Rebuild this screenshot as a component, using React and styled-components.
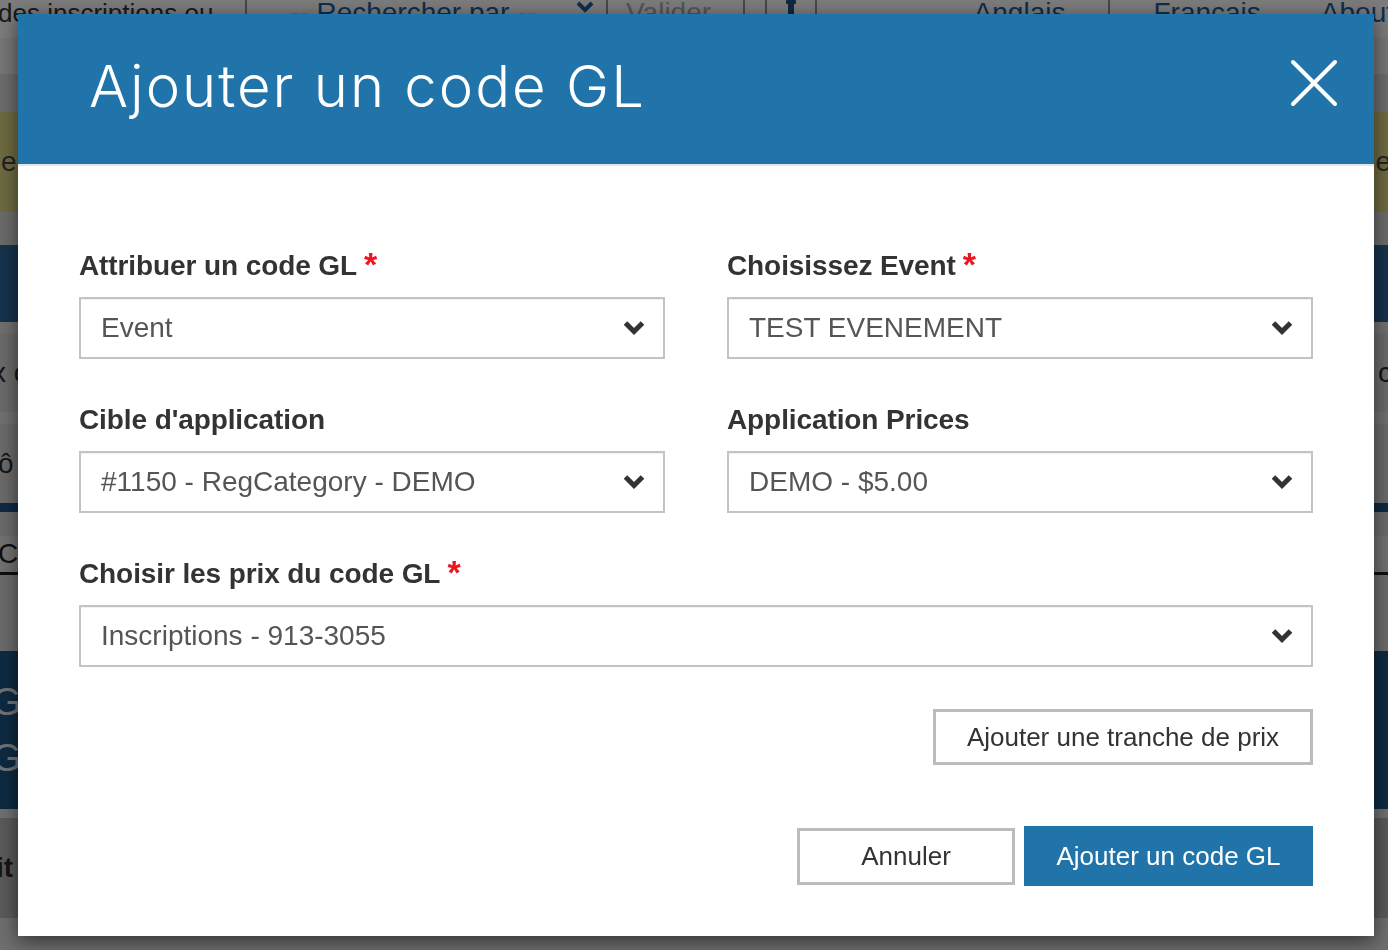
import React from 'react';
import styled, { createGlobalStyle } from 'styled-components';

const GlobalStyle = createGlobalStyle`
  html, body {
    margin: 0;
    padding: 0;
  }
  body {
    font-family: "Liberation Sans", Arial, Helvetica, sans-serif;
    color: #333;
    background: #fff;
    overflow: hidden;
  }
`;

/* ---------- page under the dialog ---------- */

const Page = styled.div`
  height: 950px;
  display: flex;
  flex-direction: column;
  background: #dadada;
  font-size: 28px;
  overflow: hidden;
`;

const TopBar = styled.nav`
  height: 38px;
  flex-shrink: 0;
  display: flex;
  background: #f6f6f6;
  line-height: 26px;
`;

const TopItem = styled.div`
  display: flex;
  align-items: flex-start;
  gap: 40px;
  padding: 0 ${(p) => p.$padRight || 0}px 0 ${(p) => p.$padLeft || 0}px;
  width: ${(p) => (p.$width ? `${p.$width}px` : 'auto')};
  box-sizing: border-box;
  border-left: ${(p) => (p.$sep ? '2px solid #8f8f8f' : 'none')};
  color: ${(p) => p.$color || '#333'};
  font-size: ${(p) => p.$size || 28}px;
  white-space: nowrap;
`;

const RightLinks = styled.div`
  margin-left: auto;
  margin-right: -6px;
  display: flex;
`;

const SubBar = styled.div`
  height: 36px;
  flex-shrink: 0;
  background: #ececec;
`;

const Strip = styled.div`
  height: ${(p) => p.$h}px;
  flex-shrink: 0;
  background: ${(p) => p.$bg || '#d6d6d6'};
`;

const Notice = styled.div`
  height: 100px;
  flex-shrink: 0;
  display: flex;
  align-items: center;
  justify-content: space-between;
  background: #dcd482;
  color: #444;
`;

const EdgeText = styled.span`
  white-space: nowrap;
  margin-left: ${(p) => p.$shift || 0}px;
  margin-right: ${(p) => p.$shiftRight || 0}px;
  font-weight: ${(p) => (p.$bold ? 700 : 400)};
`;

const SectionBar = styled.div`
  height: 77px;
  flex-shrink: 0;
  background: #2b6598;
`;

const ListRow = styled.div`
  height: ${(p) => p.$h}px;
  flex-shrink: 0;
  display: flex;
  align-items: center;
  justify-content: space-between;
  background: ${(p) => p.$bg || '#d4d4d4'};
  color: #2a2a2a;
`;

const Tabs = styled.div`
  height: 36px;
  flex-shrink: 0;
  display: flex;
  align-items: center;
  background: #e2e2e2;
  border-bottom: 3px solid #1e1e1e;
  color: #222;
`;

const NavyPanel = styled.div`
  height: 158px;
  flex-shrink: 0;
  display: flex;
  flex-direction: column;
  justify-content: center;
  gap: 16px;
  background: #1c5584;
  color: #e0e6ee;
  font-size: 38px;
  line-height: 40px;
`;

const Overlay = styled.div`
  position: fixed;
  inset: 0;
  background: rgba(0, 0, 0, 0.5);
  padding: 14px 14px 0 18px;
`;

/* ---------- dialog ---------- */

const Modal = styled.div`
  background: #fff;
  box-shadow: 0 5px 18px rgba(0, 0, 0, 0.55);
`;

const ModalHeader = styled.header`
  height: 150px;
  display: flex;
  align-items: center;
  justify-content: space-between;
  padding: 0 36px 0 71px;
  background: #2074a9;
  border-bottom: 2px solid #e5e5e5;
`;

const Title = styled.h1`
  margin: 0 0 6px;
  font-family: Inter, "Open Sans", sans-serif;
  font-weight: 300;
  font-size: 58px;
  letter-spacing: 2px;
  color: #fff;
`;

const CloseButton = styled.button`
  width: 48px;
  height: 48px;
  margin-bottom: 12px;
  padding: 0;
  border: 0;
  background: none;
  display: flex;
  align-items: center;
  justify-content: center;
  cursor: pointer;
`;

const ModalBody = styled.div`
  padding: 84px 61px 50px;
`;

const FieldGrid = styled.div`
  display: grid;
  grid-template-columns: 1fr 1fr;
  column-gap: 62px;
  row-gap: 45px;
`;

const Field = styled.div`
  grid-column: ${(p) => (p.$wide ? '1 / -1' : 'auto')};
`;

const Label = styled.label`
  display: block;
  margin-bottom: 15px;
  font-weight: 700;
  font-size: 28px;
  line-height: 32px;
  letter-spacing: -0.1px;
  color: #333;
`;

const Required = styled.span`
  margin-left: 7px;
  color: #f0141e;
  font-size: 34px;
  line-height: 0;
  position: relative;
  top: 1px;
`;

const SelectBox = styled.div`
  height: 62px;
  box-sizing: border-box;
  display: flex;
  align-items: center;
  justify-content: space-between;
  padding: 0 17px 0 20px;
  border: 2px solid #c3c3c3;
  box-shadow: inset 0 1px 1px rgba(0, 0, 0, 0.06);
  background: #fff;
  font-size: 28px;
  color: #555;
  cursor: pointer;
`;

const ActionRow = styled.div`
  display: flex;
  justify-content: flex-end;
  align-items: center;
  gap: 9px;
  margin-top: ${(p) => p.$top}px;
`;

const OutlineButton = styled.button`
  width: ${(p) => p.$width}px;
  height: ${(p) => p.$height}px;
  box-sizing: border-box;
  border: 3px solid #bcbcbc;
  background: #fff;
  font-family: inherit;
  font-size: 26px;
  color: #333;
  cursor: pointer;
`;

const PrimaryButton = styled.button`
  width: 289px;
  height: 60px;
  border: 0;
  background: #2074a9;
  font-family: inherit;
  font-size: 26px;
  color: #fff;
  cursor: pointer;
`;

const Chevron = () => (
  <svg width="24" height="18" viewBox="0 0 24 18">
    <path
      d="M3.5 4 L12 12.5 L20.5 4"
      fill="none"
      stroke="#333"
      strokeWidth="5"
      strokeLinejoin="miter"
    />
  </svg>
);

const SmallChevron = () => (
  <svg width="18" height="14" viewBox="0 0 18 14">
    <path d="M2 3 L9 10 L16 3" fill="none" stroke="#1e5a96" strokeWidth="4" />
  </svg>
);

const UserIcon = () => (
  <svg width="18" height="24" viewBox="0 0 18 24">
    <rect x="4" y="0" width="10" height="4" rx="1" fill="#1e4f80" />
    <rect x="6" y="4" width="6" height="14" fill="#1e4f80" />
    <rect x="2" y="18" width="14" height="6" rx="1" fill="#1e4f80" />
  </svg>
);

const CloseIcon = () => (
  <svg width="48" height="48" viewBox="0 0 48 48">
    <path
      d="M3 3 L45 45 M45 3 L3 45"
      stroke="#fff"
      strokeWidth="4"
      strokeLinecap="round"
    />
  </svg>
);

const Select = ({ value }) => (
  <SelectBox>
    <span>{value}</span>
    <Chevron />
  </SelectBox>
);

const fields = [
  { label: 'Attribuer un code GL', value: 'Event', required: true },
  { label: 'Choisissez Event', value: 'TEST EVENEMENT', required: true },
  { label: "Cible d'application", value: '#1150 - RegCategory - DEMO' },
  { label: 'Application Prices', value: 'DEMO - $5.00' },
  {
    label: 'Choisir les prix du code GL',
    value: 'Inscriptions - 913-3055',
    required: true,
    wide: true,
  },
];

const Background = () => (
  <Page>
    <TopBar>
      <TopItem $width={245} $size={26}>
        <EdgeText $shift={-2}>des inscriptions ou</EdgeText>
      </TopItem>
      <TopItem $sep $width={361} $padLeft={43} $color="#1e5a96">
        <span>-- Rechercher par --</span>
        <SmallChevron />
      </TopItem>
      <TopItem $sep $width={137} $padLeft={18} $color="#a8a8a8">
        Valider
      </TopItem>
      <TopItem $sep $width={22} />
      <TopItem $sep $width={50} $padLeft={15}>
        <UserIcon />
      </TopItem>
      <TopItem $sep $width={2} />
      <RightLinks>
        <TopItem $padRight={43} $color="#1e5a96">Anglais</TopItem>
        <TopItem $sep $padLeft={43} $padRight={60} $color="#1e5a96">
          Français
        </TopItem>
        <TopItem $color="#1e5a96">About</TopItem>
      </RightLinks>
    </TopBar>
    <SubBar />
    <Strip $h={38} $bg="#d8d8d8" />
    <Notice>
      <EdgeText $shift={-24}>Bleu</EdgeText>
      <EdgeText $shiftRight={-3}>e</EdgeText>
    </Notice>
    <Strip $h={33} />
    <SectionBar />
    <Strip $h={11} $bg="#e0e0e0" />
    <ListRow $h={79}>
      <EdgeText $shift={-8}>x c</EdgeText>
      <EdgeText $shiftRight={-4}>c</EdgeText>
    </ListRow>
    <Strip $h={12} $bg="#e0e0e0" />
    <ListRow $h={79}>
      <EdgeText $shift={-2}>ô</EdgeText>
    </ListRow>
    <Strip $h={9} $bg="#1c5584" />
    <Strip $h={24} />
    <Tabs>
      <EdgeText $shift={-2}>Co</EdgeText>
    </Tabs>
    <Strip $h={76} />
    <NavyPanel>
      <EdgeText $shift={-8}>G</EdgeText>
      <EdgeText $shift={-8}>G</EdgeText>
    </NavyPanel>
    <Strip $h={9} $bg="#e0e0e0" />
    <ListRow $h={100} $bg="#b4b4b4">
      <EdgeText $shift={-4} $bold>
        it
      </EdgeText>
    </ListRow>
    <Strip $h={40} $bg="#dcdcdc" />
  </Page>
);

const App = () => {
  return (
    <>
      <GlobalStyle />
      <Background />
      <Overlay>
        <Modal role="dialog">
          <ModalHeader>
            <Title>Ajouter un code GL</Title>
            <CloseButton aria-label="Fermer">
              <CloseIcon />
            </CloseButton>
          </ModalHeader>
          <ModalBody>
            <FieldGrid>
              {fields.map((f) => (
                <Field key={f.label} $wide={f.wide}>
                  <Label>
                    {f.label}
                    {f.required && <Required>*</Required>}
                  </Label>
                  <Select value={f.value} />
                </Field>
              ))}
            </FieldGrid>
            <ActionRow $top={42}>
              <OutlineButton $width={380} $height={56}>
                Ajouter une tranche de prix
              </OutlineButton>
            </ActionRow>
            <ActionRow $top={61}>
              <OutlineButton $width={218} $height={57}>
                Annuler
              </OutlineButton>
              <PrimaryButton>Ajouter un code GL</PrimaryButton>
            </ActionRow>
          </ModalBody>
        </Modal>
      </Overlay>
    </>
  );
};

export default App;
